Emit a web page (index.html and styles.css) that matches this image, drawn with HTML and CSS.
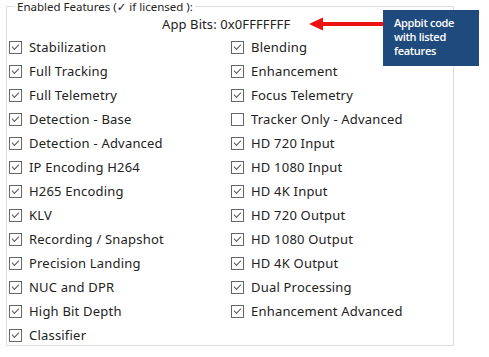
FILE: index.html
```html
<!DOCTYPE html>
<html lang="en">
<head>
    <meta charset="UTF-8">
    <title>Enabled Features</title>
    <link rel="stylesheet" href="styles.css">
</head>
<body>
    <div class="page">
        <fieldset class="features">
            <legend>Enabled Features (✓ if licensed ):</legend>
            <div class="app-bits">App Bits: 0x0FFFFFFF</div>
            <div class="grid">
                <label class="item"><span class="box on"></span>Stabilization</label>
                <label class="item"><span class="box on"></span>Blending</label>
                <label class="item"><span class="box on"></span>Full Tracking</label>
                <label class="item"><span class="box on"></span>Enhancement</label>
                <label class="item"><span class="box on"></span>Full Telemetry</label>
                <label class="item"><span class="box on"></span>Focus Telemetry</label>
                <label class="item"><span class="box on"></span>Detection - Base</label>
                <label class="item"><span class="box"></span>Tracker Only - Advanced</label>
                <label class="item"><span class="box on"></span>Detection - Advanced</label>
                <label class="item"><span class="box on"></span>HD 720 Input</label>
                <label class="item"><span class="box on"></span>IP Encoding H264</label>
                <label class="item"><span class="box on"></span>HD 1080 Input</label>
                <label class="item"><span class="box on"></span>H265 Encoding</label>
                <label class="item"><span class="box on"></span>HD 4K Input</label>
                <label class="item"><span class="box on"></span>KLV</label>
                <label class="item"><span class="box on"></span>HD 720 Output</label>
                <label class="item"><span class="box on"></span>Recording / Snapshot</label>
                <label class="item"><span class="box on"></span>HD 1080 Output</label>
                <label class="item"><span class="box on"></span>Precision Landing</label>
                <label class="item"><span class="box on"></span>HD 4K Output</label>
                <label class="item"><span class="box on"></span>NUC and DPR</label>
                <label class="item"><span class="box on"></span>Dual Processing</label>
                <label class="item"><span class="box on"></span>High Bit Depth</label>
                <label class="item"><span class="box on"></span>Enhancement Advanced</label>
                <label class="item"><span class="box on"></span>Classifier</label>
            </div>
        </fieldset>

        <!-- annotation overlay -->
        <svg class="arrow" width="76" height="14" viewBox="0 0 76 14">
            <path d="M0 7 L14 0.5 L14 13.5 Z" fill="#ee1111"/>
            <rect x="12" y="5" width="64" height="4" fill="#ee1111"/>
        </svg>
        <div class="callout">Appbit code<br>with listed<br>features</div>
    </div>
</body>
</html>
```

FILE: styles.css
```css
body {
    margin: 0;
    background-color: #fff;
    font-family: "Noto Sans", "DejaVu Sans", sans-serif;
    color: #222;
}
.page {
    position: relative;
    width: 489px;
    height: 357px;
    padding: 0 0 0 6px;
    box-sizing: border-box;
}
.features {
    width: 447px;
    height: 346px;
    box-sizing: border-box;
    margin: 0;
    padding: 0 0 0 2px;
    border: 1px solid #dcdcdc;
}
.features legend {
    margin-left: 6px;
    padding: 0 2px;
    font-size: 11.5px;
    line-height: 13px;
    color: #222;
}
.app-bits {
    padding-left: 153px;
    font-size: 13px;
    line-height: 22px;
    letter-spacing: 0.1px;
}
.grid {
    display: grid;
    grid-template-columns: 222px 222px;
    grid-auto-rows: 24px;
}
.item {
    display: flex;
    align-items: center;
    gap: 7px;
    font-size: 13px;
    letter-spacing: 0.2px;
    white-space: nowrap;
}
.box {
    position: relative;
    width: 13px;
    height: 13px;
    box-sizing: border-box;
    border: 1px solid #666;
    background: #fff;
    flex: none;
}
.box.on::after {
    content: "";
    position: absolute;
    left: 2px;
    top: 2px;
    width: 6px;
    height: 3px;
    border-left: 1px solid #555;
    border-bottom: 1px solid #555;
    transform: rotate(-45deg);
}
.arrow {
    position: absolute;
    left: 309px;
    top: 17px;
}
.callout {
    position: absolute;
    left: 383px;
    top: 10px;
    width: 96px;
    height: 56px;
    box-sizing: border-box;
    padding: 6px 0 0 11px;
    background-color: #1f4a7d;
    color: #fff;
    font-family: "Open Sans", sans-serif;
    font-size: 11px;
    font-weight: 600;
    letter-spacing: -0.3px;
    line-height: 14px;
}
```
